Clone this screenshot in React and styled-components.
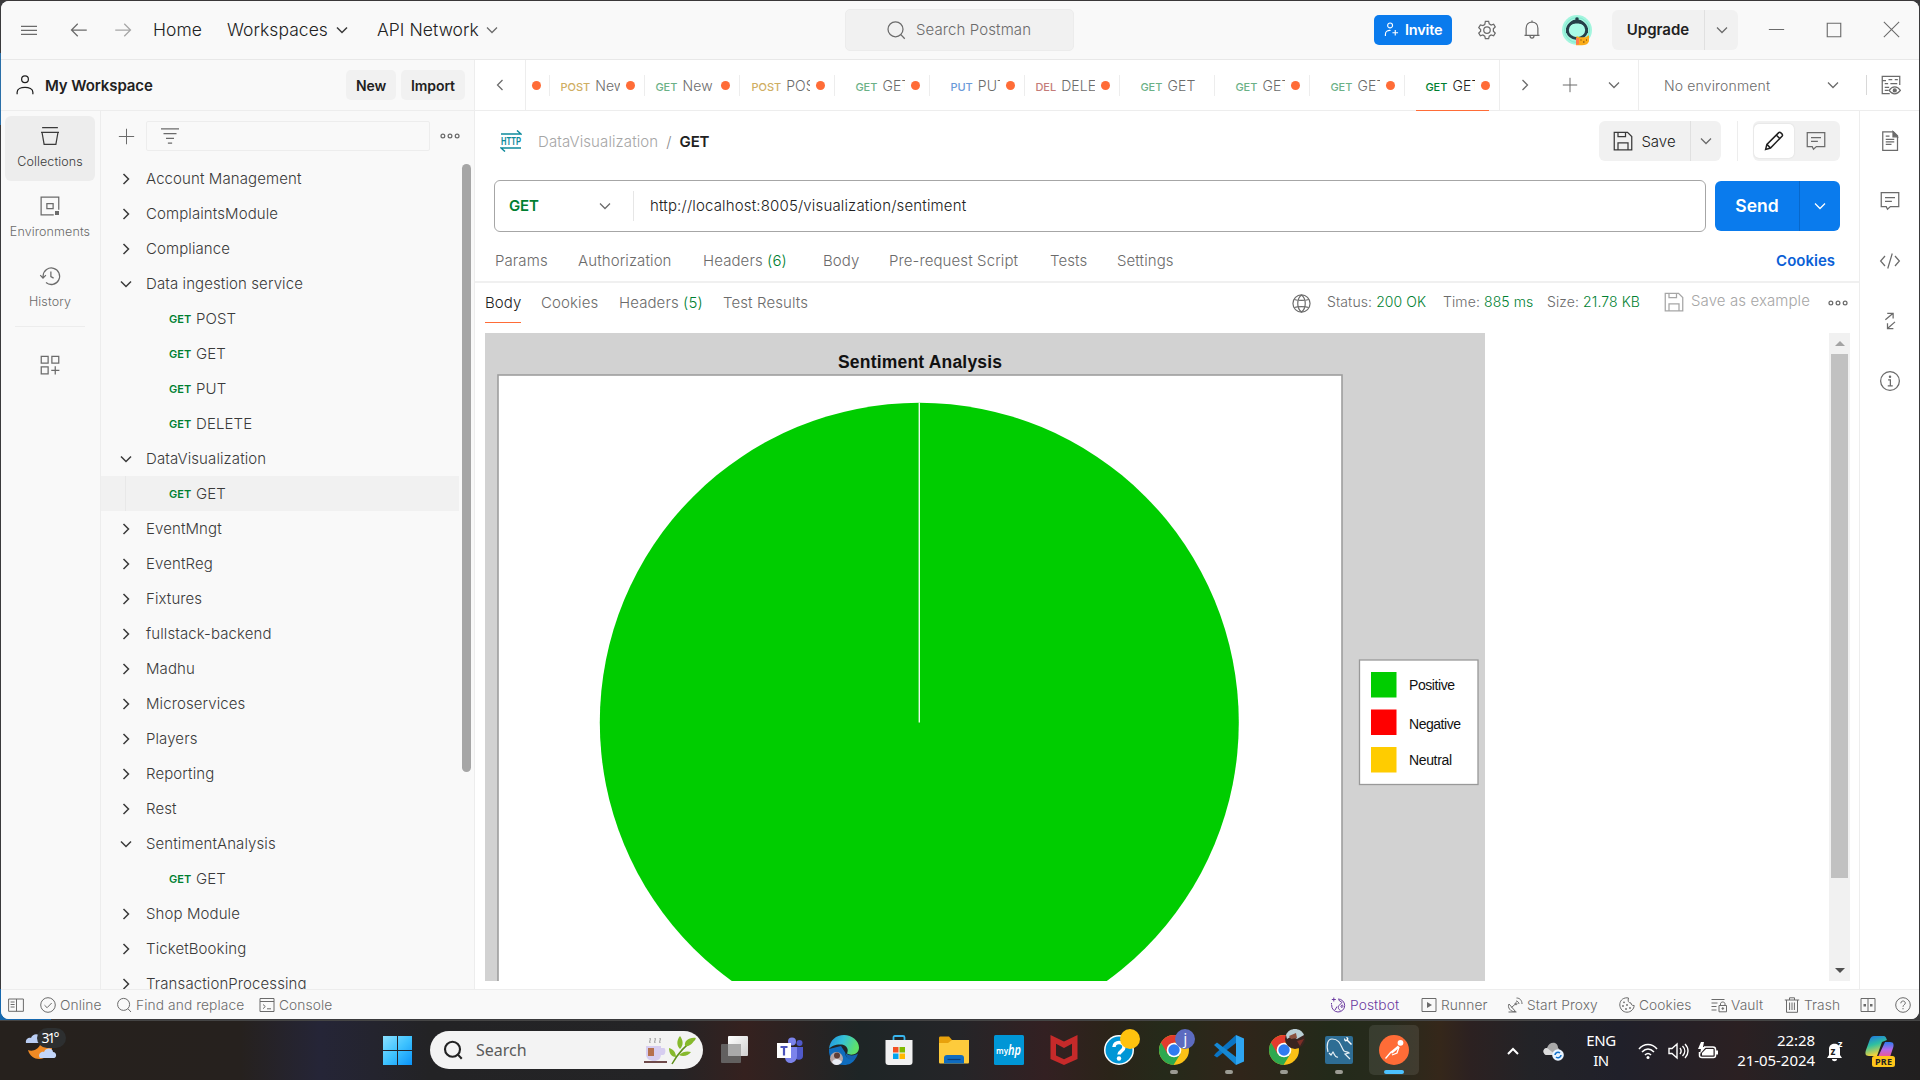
import React from "react";
import styled, { createGlobalStyle } from "styled-components";

const Global = createGlobalStyle`
  *, *::before, *::after { box-sizing: border-box; }
  body { margin: 0; background: #333; }
  #root { font-family: Inter, "Liberation Sans", sans-serif; font-weight: 355; letter-spacing: 0.1px; }
`;

/* ---------- icons ---------- */
const Svg = styled.svg`
  display: block;
  flex: none;
  width: ${(p) => p.$s || 20}px;
  height: ${(p) => p.$s || 20}px;
  fill: none;
  stroke: currentColor;
  stroke-width: ${(p) => p.$sw || 1};
  color: ${(p) => p.$c || "#6b6b6b"};
  overflow: visible;
`;

const shapes = {
  menu: <path d="M1.6 5h12.8M1.6 8.2h12.8M1.6 11.4h12.8" />,
  left: <path d="M14.2 8H2.2M7 3L2 8l5 5" />,
  right: <path d="M1.8 8h12M9 3l5 5-5 5" />,
  down: <path d="M4 6l4 4 4-4" />,
  chevLeft: <path d="M10 4L6 8l4 4" />,
  chevRight: <path d="M6 4l4 4-4 4" />,
  search: <><circle cx="7.6" cy="7.4" r="6" /><path d="M11.9 11.7L15 15" /></>,
  plus: <path d="M8 .8v14.4M.8 8h14.4" />,
  gear: <><circle cx="8" cy="8" r="2.6" /><path d="M6.7.6h2.6l.5 2 1.5.9 2-.6 1.3 2.2-1.5 1.5v1.8l1.5 1.5-1.3 2.2-2-.6-1.5.9-.5 2H6.7l-.5-2-1.5-.9-2 .6-1.3-2.2 1.5-1.5V7.1L1.400 5.600l1.300-2.200 2 .6 1.500-.9z" transform="translate(0 .5)" /></>,
  bell: <><path d="M2 12.300h12M3.300 12.300V6.500C3.300 3.500 5.300 1.600 8 1.600s4.700 1.900 4.700 4.900v5.800M8 1.600V.3M6.400 12.600c0 2.500 3.200 2.500 3.200 0" /></>,
  user: <><circle cx="8" cy="3.300" r="2.700" /><path d="M1.700 15.300v-1.600c0-5.200 12.600-5.200 12.600 0v1.600" /></>,
  invite: <><circle cx="6.500" cy="3.600" r="2.600" /><path d="M1.500 15v-2c0-3 2.500-4.300 5.500-4M12 8.500v6M9 11.500h6" /></>,
  collections: <path d="M1.700 1.300h12.600M.8 5h14.400M1.600 5l1.700 9.700h9.400L14.400 5" />,
  environments: <><path d="M11 15H.9V.9H15V11" /><path d="M5.500 6h5v4h-5z" /><path d="M12 12h3.200v3.200H12z" fill="currentColor" stroke="none" /></>,
  history: <><path d="M2.500 9.500V7.800a6.600 6.600 0 1 1 2.300 5.400M.2 7.300l2.200 2.400 2.300-2.400M8.700 4.300v4.200l2.200 1.200" /></>,
  apps: <><path d="M1 1h5.500v5.500H1zM9.500 1H15v5.500H9.500zM1 9.500h5.500V15H1zM12.200 9v6.500M9 12.200h6.500" /></>,
  filter: <path d="M.8 2.300h14.400M2.800 6.100h10.400M4.800 9.900h6.400M6.300 13.600h3.400" />,
  dots: <><circle cx="2.300" cy="8" r="1.500" /><circle cx="8" cy="8" r="1.500" /><circle cx="13.700" cy="8" r="1.500" /></>,
  save: <><path d="M1 1h10.600L15 4.400V15H1zM4 1v3.400h6V1M4 15V9.500h8V15" /></>,
  pencil: <><path d="M1.300 14.700l1-4L11.800 1.300c1-1 3.800 1.700 2.800 2.700L5.200 13.600zM9.800 3.200l2.900 2.900M2.300 10.700l2.900 2.900" /></>,
  comment: <><path d="M1 1.300h14v11.200H8.300L6 14.600l-1-2.100H1zM4 5.200h8M4 8.200h5.500" /></>,
  doc: <><path d="M2.200.6h8.600l3.200 3.200v11.600H2.200zM4.600 6.700h6.800M4.600 8.700h6.800M4.600 10.700h4.600M4.600 4h3" /><path d="M10.400.6v4H14z" fill="currentColor" /></>,
  code: <path d="M4 4L.5 8 4 12M12 4l3.500 4L12 12M9.800 2L6.200 14" />,
  swap: <><path d="M4.300 7L10.500 1.800M5.800 1.800h4.700v4.200M12 8.700L6 14M6 9.700V14h4.700" /></>,
  info: <><circle cx="8" cy="8" r="7.500" /><path d="M6.500 7h1.800v4.700M6.200 11.800h4" /><circle cx="8" cy="4.500" r=".5" fill="currentColor" /></>,
  envQuick: <><path d="M7 14.800H1V1h14v7M1 4.500h3M6 3.700h3M11 3.700h2.500M3 6.800h2.700M7.500 6.800H13M3 9.800h3.500M3 12.300h3" /><path d="M6.500 12.300c2.500-3.800 6.500-3.800 9 0-2.500 3.600-6.500 3.600-9 0z" /><circle cx="11" cy="12.300" r="1.200" fill="currentColor" /></>,
  globe: <><circle cx="8" cy="8" r="7.200" /><path d="M8 .8C3.800 4 3.800 12 8 15.200 12.200 12 12.200 4 8 .8M1.900 4.600c3 1 9.200 1 12.200 0M1.900 11.400c3-1 9.200-1 12.200 0" /></>,
  panel: <path d="M.6 2h14.800v12.300H.6zM8.500 2v12.300M2.600 5h4M2.600 7.500h4M2.600 10h4" />,
  check: <><circle cx="8" cy="8" r="7.300" /><path d="M4.500 8.200l2.600 2.500L11.700 6" /></>,
  console: <path d="M1 1.500h14v13H1zM1 4.500h14M4 7.500l2.300 2L4 11.700M8 11.800h4" />,
  postbot: <><path d="M8 2a6.500 6.500 0 1 1-6.300 6M3.800.5v4M1.800 2.500h4M1.500 6v1.500" /><path d="M8.500 3L12 5.500 9 8.500c-1.500 2-.5 3.800 1.500 5M5 13l2-3.500M11 9c1-1.500 2-1 2 0s-1 2-2 1z" /></>,
  runner: <><path d="M1 1.500h14v13H1z" /><path d="M6 5l5 3-5 3z" fill="currentColor" stroke="none" /></>,
  proxy: <><path d="M2 7c-2 3 1.500 8.500 6.500 7.500zM4.500 10.500L9 6.500M1.500 15h8M9 4c1.500 0 3 1.500 3 3M9.500 1c3.500 0 5.500 2.500 5.500 6" /><circle cx="9" cy="6.800" r="1" /></>,
  cookie: <><path d="M8 .8C3 .8.700 4.500.8 8c.2 4 3.200 7.200 7.200 7.200S15 12 15.200 8.500C13 8.700 12 7.500 12 6 9.500 6 8.500 4 9.500 1z" /><g fill="currentColor" stroke="none"><circle cx="5" cy="5.300" r=".9" /><circle cx="4" cy="9" r=".9" /><circle cx="8" cy="8" r=".9" /><circle cx="7" cy="12" r=".9" /><circle cx="11" cy="11" r=".9" /></g></>,
  vault: <><path d="M.5 2.500h13M.5 6h6M.5 9.500h5M.5 13h5M8 8.500h7.500v6.300H8zM9.500 8.500V6.800c0-2.400 4.500-2.400 4.500 0v1.700" /><circle cx="11.800" cy="11.500" r=".8" fill="currentColor" /></>,
  trash: <path d="M.8 3h14.400M5.500 3V.8h5V3M2.500 3v12.300h11V3M5.600 5.500v7.500M8 5.500v7.500M10.400 5.500v7.500" />,
  panes: <><path d="M1 1.500h14v13H1zM8 1.500v13" /><path d="M3.500 7H6v2.500H3.500zM10 7h2.500v2.500H10z" fill="currentColor" stroke="none" /></>,
  help: <><circle cx="8" cy="8" r="7.300" /><path d="M5.800 6.300c0-3 4.500-3 4.500-.2C10.300 7.800 8 7.800 8 9.800M8 11v1.300" /></>,
  minimize: <path d="M.8 8h14.400" />,
  maximize: <path d="M2 2h12v12H2z" />,
  close: <path d="M.8.8l14.400 14.400M15.200.8L.8 15.200" />,
};

const Icon = ({ n, s, c, sw }) => (
  <Svg viewBox="0 0 16 16" $s={s} $c={c} $sw={sw} aria-hidden="true">{shapes[n]}</Svg>
);

/* ---------- shell ---------- */
const Desktop = styled.div`
  width: 1920px;
  height: 1080px;
  display: flex;
  flex-direction: column;
  overflow: hidden;
  background:
    linear-gradient(#3a3839, #3a3839) 0 0 / 1920px 1px no-repeat,
    linear-gradient(90deg, #1668ae, #1668ae) 0 989px / 51px 31px no-repeat,
    linear-gradient(#2a6fa8, #2a6fa8) 0 53px / 1px 72px no-repeat,
    #3a3a3c;
`;
const AppWindow = styled.div`
  width: 1918px;
  height: 1018px;
  margin: 1px 1px 0;
  display: flex;
  flex-direction: column;
  overflow: hidden;
  background: #fff;
  border-radius: 8px;
  flex: none;
`;
const Cell = styled.div`
  width: ${(p) => p.$w}px;
  height: 100%;
  flex: none;
  display: flex;
  align-items: center;
  justify-content: center;
`;
const Spring = styled.div`flex: 1;`;

/* ---------- title bar ---------- */
const TitleBar = styled.header`
  height: 59px;
  flex: none;
  display: flex;
  align-items: center;
  padding-bottom: 1px;
  background: #f9f9f9;
  border-bottom: 1px solid #e8e8e8;
`;
const TitleLeft = styled.div`
  width: 844px;
  height: 100%;
  display: flex;
  align-items: center;
  padding-left: 4px;
`;
const NavItem = styled.div`
  width: ${(p) => p.$w}px;
  margin-left: ${(p) => p.$ml}px;
  display: flex;
  align-items: center;
  justify-content: space-between;
  font-size: 17.5px;
  letter-spacing: 0.05px;
  color: #212121;
  white-space: nowrap;
`;
const SearchBox = styled.div`
  width: 229px;
  height: 42px;
  display: flex;
  align-items: center;
  gap: 10px;
  padding-left: 40px;
  background: #f1f1f1;
  border: 1px solid #ececec;
  border-radius: 5px;
  font-size: 15px;
  color: #6b6b6b;
`;
const InviteButton = styled.div`
  width: 78px;
  height: 30px;
  margin-left: 300px;
  display: flex;
  align-items: center;
  gap: 6px;
  padding-left: 10px;
  border-radius: 5px;
  background: #0a7bed;
  color: #fff;
  font-size: 14.500px;
  font-weight: 600;
  letter-spacing: -0.2px;
`;
const SplitButton = styled.div`
  width: ${(p) => p.$w}px;
  height: 40px;
  display: flex;
  align-items: center;
  border-radius: 6px;
  background: #f1f1f1;
  font-size: 15px;
  font-weight: ${(p) => p.$weight || "inherit"};
  letter-spacing: 0;
  color: #212121;
`;
const SplitMain = styled.div`
  width: ${(p) => p.$w}px;
  height: 100%;
  display: flex;
  align-items: center;
  justify-content: center;
  gap: 8px;
  padding-bottom: ${(p) => p.$lift || 0}px;
  border-right: 1px solid ${(p) => p.$line || "#e0e0e0"};
`;

/* ---------- workspace bar ---------- */
const WorkspaceBar = styled.div`
  height: 51px;
  flex: none;
  display: flex;
  border-bottom: 1px solid #ededed;
`;
const WorkspaceHead = styled.div`
  width: 474px;
  display: flex;
  align-items: center;
  padding: 0 9px 0 14px;
  background: #f9f9f9;
  border-right: 1px solid #ededed;
  font-size: 15px;
  font-weight: 600;
  letter-spacing: -0.1px;
  color: #212121;
  gap: 10px;
`;
const GhostButton = styled.div`
  width: ${(p) => p.$w}px;
  height: 30px;
  margin-left: ${(p) => p.$ml || 0}px;
  display: flex;
  align-items: center;
  justify-content: center;
  border-radius: 5px;
  background: #f1f1f1;
  font-size: 14px;
  font-weight: 600;
`;
const TabStrip = styled.div`
  display: flex;
  width: 975px;
  border-left: 1px solid #ededed;
  border-right: 1px solid #ededed;
`;
const methodColor = { GET: "#6bb187", POST: "#cfae63", PUT: "#6a9ad9", DEL: "#c47b78" };
const Tab = styled.div`
  position: relative;
  width: 95px;
  flex: none;
  height: 51px;
  display: flex;
  align-items: center;
  padding-left: ${(p) => p.$pl}px;
  color: ${(p) => (p.$active ? "#212121" : "#6b6b6b")};
  &::before {
    content: "";
    position: absolute;
    left: 0;
    top: 15px;
    width: 1px;
    height: 21px;
    background: #ededed;
  }
  &::after {
    content: "";
    position: absolute;
    left: 12px;
    bottom: 0;
    width: 73px;
    height: 1px;
    background: ${(p) => (p.$active ? "#ff6c37" : "transparent")};
  }
`;
const TabLabel = styled.div`
  width: ${(p) => 71 - p.$pl}px;
  display: flex;
  align-items: baseline;
  gap: 5px;
  overflow: ${(p) => (p.$full ? "visible" : "hidden")};
  white-space: nowrap;
  font-size: 14px;
`;
const TabMethod = styled.span`
  font-size: 11px;
  font-weight: 500;
  letter-spacing: 0;
  color: ${(p) => (p.$active ? "#007f31" : methodColor[p.$m])};
`;
const Dot = styled.span`
  width: 9px;
  height: 9px;
  margin-left: 6px;
  border-radius: 50%;
  background: #ff6c37;
`;
const PartTab = styled.div`
  width: 23.4px;
  flex: none;
  display: flex;
  align-items: center;
`;
const EnvPicker = styled.div`
  width: 228px;
  display: flex;
  align-items: center;
  justify-content: space-between;
  padding: 0 23px 0 25px;
  border-left: 1px solid #ededed;
  font-size: 14px;
  letter-spacing: 0.15px;
  color: #6b6b6b;
`;
const ShortRule = styled.div`
  width: 1px;
  height: ${(p) => p.$h || 20}px;
  background: ${(p) => p.$c || "#d8d8d8"};
  align-self: center;
`;

/* ---------- body ---------- */
const Body = styled.div`
  height: 878px;
  flex: none;
  display: flex;
`;
const IconRail = styled.nav`
  width: 100px;
  background: #f9f9f9;
  border-right: 1px solid #ededed;
  display: flex;
  flex-direction: column;
  align-items: center;
  padding: 5px 1px 0 0;
`;
const RailItem = styled.div`
  width: 90px;
  height: 65px;
  margin-bottom: 5px;
  padding-top: 10px;
  display: flex;
  flex-direction: column;
  align-items: center;
  gap: 7px;
  border-radius: 6px;
  background: ${(p) => (p.$active ? "#ededed" : "transparent")};
  color: ${(p) => (p.$active ? "#3a3a3a" : "#6b6b6b")};
  font-size: 12.500px;
  line-height: 18px;
`;
const RailRule = styled.div`
  width: 70px;
  height: 1px;
  margin: 0 0 28px;
  background: #ededed;
`;
const Sidebar = styled.aside`
  width: 374px;
  background: #f9f9f9;
  border-right: 1px solid #ededed;
  display: flex;
  flex-direction: column;
`;
const FilterRow = styled.div`
  height: 50px;
  flex: none;
  display: flex;
  align-items: center;
  padding-left: 5px;
`;
const FilterInput = styled.div`
  width: 284px;
  height: 30px;
  border: 1px solid #ededed;
  border-radius: 2px;
  display: flex;
  align-items: center;
  padding-left: 13px;
`;
const TreeArea = styled.div`
  flex: 1;
  min-height: 0;
  display: flex;
  overflow: hidden;
`;
const Tree = styled.div`
  width: 358px;
`;
const Folder = styled.div`
  height: 35px;
  display: flex;
  align-items: center;
  padding-left: 15px;
  gap: 10px;
  font-size: 15px;
  color: #3a3a3a;
`;
const Request = styled.div`
  height: 35px;
  display: flex;
  align-items: center;
  background: ${(p) => (p.$active ? "#f1f1f1" : "transparent")};
  font-size: 15px;
  color: #3a3a3a;
`;
const Guide = styled.div`
  width: 44px;
  height: 35px;
  margin-left: 24px;
  border-left: 1px solid ${(p) => (p.$active ? "#e8e8e8" : "transparent")};
`;
const Verb = styled.span`
  width: 27px;
  font-size: 11px;
  font-weight: 600;
  letter-spacing: 0;
  color: #007f31;
`;
const Thumb = styled.div`
  width: 9px;
  height: 608px;
  margin: 3px 0 0 3px;
  border-radius: 5px;
  background: #a6a6a6;
`;

const Main = styled.main`
  width: 1385px;
  border-right: 1px solid #ededed;
  display: flex;
  flex-direction: column;
`;
const CrumbRow = styled.div`
  height: 60px;
  flex: none;
  display: flex;
  align-items: center;
  padding: 0 19px 0 25px;
  font-size: 15px;
  color: #a6a6a6;
`;
const HttpIcon = styled.svg`
  width: 22px;
  height: 22px;
  margin-right: 16px;
  fill: none;
  stroke: #0e8a9c;
  stroke-width: 1.5;
  text { fill: #0e8a9c; stroke: none; font: 600 11px "Liberation Sans Narrow", "Liberation Sans", sans-serif; }
`;
const CrumbName = styled.span`
  font-weight: 600;
  letter-spacing: -0.2px;
  color: #212121;
`;
const Slash = styled.span`
  margin: 0 8px 0 8px;
  color: #8a8a8a;
`;
const Toggle = styled.div`
  width: 87px;
  height: 40px;
  padding: 3px 1px;
  display: flex;
  border-radius: 6px;
  background: #f1f1f1;
`;
const ToggleItem = styled.div`
  width: ${(p) => (p.$on ? 40 : 43)}px;
  height: 34px;
  display: flex;
  align-items: center;
  justify-content: center;
  border-radius: 5px;
  background: ${(p) => (p.$on ? "#fff" : "transparent")};
  box-shadow: ${(p) => (p.$on ? "0 0 2px rgba(0,0,0,.12)" : "none")};
`;
const UrlRow = styled.div`
  height: 70px;
  flex: none;
  display: flex;
  align-items: center;
  padding: 0 19px 0 19px;
`;
const UrlBox = styled.div`
  width: 1212px;
  height: 52px;
  display: flex;
  align-items: center;
  padding-bottom: 1px;
  border: 1px solid #a6a6a6;
  border-radius: 6px;
  font-size: 15px;
  color: #212121;
`;
const MethodPick = styled.div`
  width: 138px;
  display: flex;
  align-items: center;
  justify-content: space-between;
  padding: 0 18px 0 14px;
  color: #007f31;
  font-weight: 600;
  letter-spacing: -0.2px;
`;
const UrlText = styled.span`
  margin-left: 16px;
  letter-spacing: 0.16px;
`;
const SendButton = styled.div`
  width: 125px;
  height: 50px;
  margin-left: 9px;
  display: flex;
  align-items: center;
  border-radius: 6px;
  background: #0a7bed;
  color: #fff;
  font-size: 17.500px;
  font-weight: 600;
  letter-spacing: 0;
`;
const RequestTabs = styled.div`
  height: 42px;
  flex: none;
  display: flex;
  align-items: center;
  padding: 0 24px 2px 20px;
  border-bottom: 2px solid #f0f0f0;
  font-size: 15px;
  color: #6b6b6b;
`;
const TextTab = styled.div`
  width: ${(p) => p.$w}px;
  flex: none;
  white-space: pre;
  em { font-style: normal; color: #007f31; }
`;
const CookiesLink = styled.span`
  font-weight: 600;
  letter-spacing: 0px;
  color: #0b5fd6;
`;
const ResponseBar = styled.div`
  height: 50px;
  flex: none;
  display: flex;
  align-items: flex-start;
  padding: 0 10px 0 10px;
  font-size: 15px;
  line-height: 40px;
  color: #6b6b6b;
`;
const ActiveTab = styled(TextTab)`
  width: 36px;
  height: 40px;
  margin-right: 20px;
  color: #212121;
  border-bottom: 1px solid #ff6c37;
`;
const MetaIcon = styled.div`
  width: ${(p) => p.$w}px;
  height: ${(p) => p.$h || 40}px;
  display: flex;
  align-items: center;
`;
const Stat = styled.span`
  width: ${(p) => p.$w}px;
  flex: none;
  white-space: pre;
  font-size: 14px;
  line-height: 38px;
  b { font-weight: inherit; color: #007f31; }
`;
const SaveExample = styled.span`
  width: 137px;
  flex: none;
  line-height: 36px;
  color: #a6a6a6;
`;
const Preview = styled.div`
  flex: 1;
  min-height: 0;
  display: flex;
  padding: 0 9px 8px 10px;
`;
const Chart = styled.svg`
  display: block;
  width: 1000px;
  height: 648px;
  background: #d2d2d2;
  text { font-family: "Liberation Sans", Arial, sans-serif; fill: #111; letter-spacing: 0; }
`;
const ScrollTrack = styled.div`
  width: 21px;
  height: 648px;
  margin-left: auto;
  display: flex;
  flex-direction: column;
  align-items: center;
  justify-content: space-between;
  background: #f1f1f1;
`;
const ScrollThumb = styled.div`
  width: 17px;
  height: 524px;
  margin-bottom: auto;
  background: #c1c1c1;
`;
const Arrow = styled.div`
  width: 21px;
  height: 21px;
  display: flex;
  align-items: center;
  justify-content: center;
  &::after {
    content: "";
    border: 5px solid transparent;
    border-top-width: ${(p) => (p.$up ? 0 : 5)}px;
    border-bottom-width: ${(p) => (p.$up ? 5 : 0)}px;
    border-top-color: #505050;
    border-bottom-color: #a3a3a3;
  }
`;
const ToolRail = styled.nav`
  flex: 1;
  display: flex;
  flex-direction: column;
  align-items: center;
  padding-top: 20px;
  gap: 40px;
`;

/* ---------- status bar ---------- */
const StatusBar = styled.footer`
  flex: 1;
  display: flex;
  align-items: center;
  padding: 1px 8px 0 7px;
  background: #f9f9f9;
  border-top: 1px solid #ededed;
  font-size: 13.750px;
  color: #6b6b6b;
`;
const StatusItem = styled.div`
  width: ${(p) => p.$w}px;
  flex: none;
  display: flex;
  align-items: center;
  gap: 4px;
  white-space: nowrap;
  color: ${(p) => p.$c || "inherit"};
`;

/* ---------- taskbar ---------- */
const Taskbar = styled.div`
  flex: 1;
  margin-top: 1px;
  display: flex;
  align-items: center;
  border-top: 1px solid #454545;
  font-family: "Noto Sans", "Open Sans", sans-serif;
  font-weight: 400;
  letter-spacing: 0;
  background: linear-gradient(90deg, #26211d 0, #26211e 240px, #252537 320px, #232325 430px, #242426 670px, #35211f 745px, #1e2526 860px, #252528 960px, #332022 1045px, #2b2419 1110px, #252a1a 1165px, #30251a 1240px, #232a1a 1330px, #272a1c 1390px, #35271a 1440px, #2c2121 1470px, #232327 1530px, #20202a 1620px, #2b2022 1740px, #212225 1810px, #211f1f 1920px);
`;
const Weather = styled.div`
  width: 383px;
  height: 100%;
  padding: 7px 0 0 24px;
`;
const TaskSearch = styled.div`
  width: 273px;
  height: 38px;
  margin: 0 6px 2px 18px;
  display: flex;
  align-items: center;
  padding: 0 5px 0 13px;
  gap: 13px;
  border-radius: 19px;
  background: #f3f3f3;
  color: #5a5a5a;
  font-size: 16px;
`;
const TaskButton = styled.div`
  width: 50px;
  height: 50px;
  margin: 0 5px 2px 0;
  display: flex;
  flex-direction: column;
  align-items: center;
  border-radius: 5px;
  background: ${(p) => (p.$active ? "rgba(255,255,255,.09)" : "transparent")};
  padding-top: 10px;
  &::after {
    content: "";
    width: ${(p) => (p.$active ? 20 : 8)}px;
    height: 4px;
    margin-top: 5px;
    border-radius: 2px;
    background: ${(p) => (p.$active ? "#4cc2ff" : p.$open ? "#9b9b93" : "transparent")};
  }
`;
const Art = styled.svg`
  display: block;
  flex: none;
  width: ${(p) => p.$w || 30}px;
  height: ${(p) => p.$h || 30}px;
  overflow: visible;
`;
const TrayText = styled.div`
  width: ${(p) => p.$w}px;
  text-align: ${(p) => p.$align || "center"};
  color: #fff;
  font-size: 15px;
  line-height: 20px;
  letter-spacing: ${(p) => p.$ls}px;
  white-space: pre-line;
  padding-bottom: 2px;
`;

/* ---------- data ---------- */
const tabs = [
  { m: "POST", t: "New", pl: 11, d: 1 },
  { m: "GET", t: "New", pl: 11, d: 1 },
  { m: "POST", t: "POST", pl: 12, d: 1 },
  { m: "GET", t: "GET", pl: 21, d: 1 },
  { m: "PUT", t: "PUT", pl: 21, d: 1 },
  { m: "DEL", t: "DELETE", pl: 11, d: 1 },
  { m: "GET", t: "GET", pl: 21 },
  { m: "GET", t: "GET", pl: 21, d: 1 },
  { m: "GET", t: "GET", pl: 21, d: 1 },
  { m: "GET", t: "GET", pl: 21, d: 1, active: true },
];
const tree = [
  ["Account Management"], ["ComplaintsModule"], ["Compliance"], ["Data ingestion service", 1],
  "POST", "GET", "PUT", "DELETE", ["DataVisualization", 1], "*GET", ["EventMngt"], ["EventReg"], ["Fixtures"],
  ["fullstack-backend"], ["Madhu"], ["Microservices"], ["Players"], ["Reporting"], ["Rest"],
  ["SentimentAnalysis", 1], "GET", ["Shop Module"], ["TicketBooking"], ["TransactionProcessing"],
];

const Avatar = () => (
  <Art viewBox="0 0 30 30">
    <circle cx="15" cy="15" r="15" fill="#a3f5de" />
    <circle cx="15" cy="15" r="12.500" fill="none" stroke="#7eead0" />
    <circle cx="15" cy="4" r="1.800" fill="#26404a" />
    <ellipse cx="15" cy="15" rx="9.600" ry="8.600" fill="#a9fbe7" stroke="#26404a" strokeWidth="2.800" />
    <path d="M5.500 13a9.500 8.500 0 0 1 19 0c-2-3.500-6-4.500-9.500-4.500S7.500 9.500 5.500 13z" fill="#26404a" />
    <path d="M4 13h2v5H4zM24 13h2v5h-2z" fill="#26404a" />
    <path d="M14.500 21l3 1.200h6l3.500-2v6c-1 3-4 4-7 4h-6z" fill="#fbac19" />
    <path d="M14 23h3v6.500h-3z" fill="#ff7a4f" />
    <path d="M18.500 25h1M24 25h1M21 27h1.500" stroke="#5e3a10" />
  </Art>
);

const PieChart = () => (
  <Chart viewBox="485 333 1000 648">
    <rect x="498" y="375" width="844" height="700" fill="#fff" stroke="#9e9e9e" strokeWidth="1.600" />
    <circle cx="919.300" cy="722.300" r="319.500" fill="#00cd00" />
    <path d="M919.300 402.500V722.500" stroke="#e6fbe6" strokeWidth="1.400" />
    <text x="838" y="368" fontSize="17.500" fontWeight="700" textLength="164">Sentiment Analysis</text>
    <rect x="1359.500" y="660" width="118.500" height="124.500" fill="#fff" stroke="#999" strokeWidth="1.300" />
    <rect x="1371" y="672" width="25.500" height="25.500" fill="#00cd00" />
    <rect x="1371" y="709.500" width="25.500" height="25.500" fill="#f00" />
    <rect x="1371" y="747" width="25.500" height="25.500" fill="#fc0" />
    <text x="1409" y="690" fontSize="14" fontWeight="400" textLength="46">Positive</text>
    <text x="1409" y="729" fontSize="14" fontWeight="400" textLength="52">Negative</text>
    <text x="1409" y="765" fontSize="14" fontWeight="400" textLength="43">Neutral</text>
  </Chart>
);

const Chrome = ({ children }) => (
  <Art viewBox="0 0 30 30">
    <circle cx="15" cy="15" r="15" fill="#fbc116" />
    <path d="M15 15h-7L2 7.500A15 15 0 0 0 14.500 30L21.500 18.700z" fill="#2da94f" />
    <path d="M2 7.500A15 15 0 0 1 28 7.500H15L8.500 18.700z" fill="#e33b2e" />
    <circle cx="15" cy="15" r="7.300" fill="#fff" />
    <circle cx="15" cy="15" r="5.700" fill="#2f7bf0" />
    {children}
  </Art>
);

const apps = [
  { art: <Art viewBox="0 0 30 30"><defs><linearGradient id="tv" x2="1" y2="1"><stop stopColor="#fff" /><stop offset="1" stopColor="#cfcfcf" /></linearGradient></defs><rect x="9" y="1" width="20" height="20" rx="1" fill="url(#tv)" /><rect x="2" y="9" width="20" height="19" rx="1" fill="#6b6b6b" opacity=".85" /><path d="M9 9h13v12H9z" fill="#a9a9a9" /></Art> },
  { art: <Art viewBox="0 0 30 30"><circle cx="18" cy="6.500" r="4" fill="#7b83eb" /><circle cx="25.500" cy="8" r="3" fill="#5059c9" /><path d="M20 12h9v9c0 5-8 5-9 0z" fill="#5059c9" /><path d="M11 12h12v9c0 8-11 10-12 2z" fill="#7b83eb" /><rect x="3" y="8" width="14" height="15" fill="#fff" /><path d="M6.500 12h7M10 12v8.500" stroke="#4b53bc" strokeWidth="2.200" /></Art> },
  { art: <Art viewBox="0 0 30 30"><defs><linearGradient id="ed" x2="1" y2=".3"><stop stopColor="#1f8fe0" /><stop offset=".5" stopColor="#35c1d6" /><stop offset="1" stopColor="#5ee06a" /></linearGradient></defs><path d="M0 14C-1 23 6 30 15 30c5 0 9-2 11.500-6.500C21 25 16 23 16.500 18L12 11z" fill="#0f6cbd" /><path d="M0 14C1 5 7 0 15 0s15 6 15 12.500c0 7-8 8.500-12 6 2-4 0-8-5-9C7 9 2 11 0 14z" fill="url(#ed)" /><path d="M17 18.500c4 3 9 2 12 0-1 3-2 5-3.500 6-5 1-9-1-8.500-6z" fill="#1562ad" /><circle cx="7.500" cy="23.500" r="6.500" fill="#b7a6a6" /><circle cx="8" cy="20.500" r="3" fill="#5f3d36" /><path d="M3 27c2-4 7-4 10 0-3 4-8 4-10 0z" fill="#e9edf5" /></Art> },
  { art: <Art viewBox="0 0 30 30"><path d="M9.500 7V2.500c0-1 .5-1.500 1.500-1.500h8c1 0 1.500.5 1.500 1.500V7" fill="none" stroke="#38b6ee" strokeWidth="1.800" /><path d="M1.500 5h27v22c0 2-1 3-3 3h-21c-2 0-3-1-3-3z" fill="#f1f1f1" /><path d="M9 12h5.500v5.500H9z" fill="#f25022" /><path d="M15.500 12H21v5.500h-5.500z" fill="#7fba00" /><path d="M9 18.500h5.500V24H9z" fill="#00a4ef" /><path d="M15.500 18.500H21V24h-5.500z" fill="#ffb900" /></Art> },
  { art: <Art viewBox="0 0 30 30"><path d="M0 3c0-1 .5-1.500 1.500-1.500H10l3 3.500v5H0z" fill="#e8a20c" /><path d="M0 8h9l4-3h17v22c0 1-.5 1.500-1.500 1.500h-27C.5 28.500 0 28 0 27z" fill="#fdcb3c" /><path d="M5 28.500V23c0-2 1-3 3-3h14c2 0 3 1 3 3v5.500z" fill="#0f6cc0" /><path d="M8.500 24.500h13" stroke="#083f7c" strokeWidth="1.200" /></Art> },
  { art: <Art viewBox="0 0 30 30"><rect width="30" height="30" rx="1.500" fill="#0096d6" /><text x="2" y="18.500" fontSize="9" fontWeight="600" fill="#fff" textLength="12" lengthAdjust="spacingAndGlyphs">my</text><text x="14" y="19.500" fontSize="14" fontStyle="italic" fontWeight="600" fill="#fff" textLength="13" lengthAdjust="spacingAndGlyphs">hp</text></Art> },
  { art: <Art viewBox="0 0 30 30"><path d="M1.500 0L15 6.500 28.500 0v24L15 30 1.500 24zM7 8.800v11.700l8 3.700 8-3.700V8.800l-8 4.200z" fill="#c62a2a" fillRule="evenodd" /></Art> },
  { art: <Art viewBox="0 0 30 30"><circle cx="15" cy="15" r="15" fill="#fff" /><circle cx="15" cy="15" r="13.500" fill="#0096d6" /><path d="M10 12c0-6 10-6 10 0 0 4-5 4-5 7.500" fill="none" stroke="#fff" strokeWidth="3.500" /><circle cx="15" cy="23.500" r="2.200" fill="#fff" /><circle cx="26" cy="4" r="10" fill="#ffc20e" /></Art> },
  { open: 1, art: <Chrome><circle cx="26" cy="4" r="10" fill="#5c6bc0" /><text x="24.500" y="9" fontSize="14" fill="#fff">j</text></Chrome> },
  { open: 1, art: <Art viewBox="0 0 30 30"><path d="M22 0l-20 18 -2 2.500L3 22.500 22 8z" fill="#0a74c4" /><path d="M0 10l3-2.500L22 22v8z" fill="#1588d4" /><path d="M22 0l8 3.500v23L22 30z" fill="#2ea5f2" /></Art> },
  { open: 1, art: <Chrome><circle cx="26" cy="4" r="10" fill="#3a2420" /><path d="M17 0C20-8 32-8 35 0l-7 4-5-3-5 3z" fill="#b9cfd6" /><path d="M20 1l7-3 1 5-6 1z" fill="#8b5240" /><path d="M28 6l7-2-4 7z" fill="#7e2f27" /></Chrome> },
  { open: 1, art: <Art viewBox="0 0 30 30"><rect x="1" y="1" width="28" height="28" rx="2" fill="#2e6d94" /><path d="M4 17C2 9 4 4 8 4c9 0 9 9 12 12 2 1 4 1 5 2l-4 1 5 5M5 18l2 2 2-3c2 3 2 6 5 5" fill="none" stroke="#e6eff4" strokeWidth="1.200" /><path d="M20 3c0 3 1 4 3 3l4 4 1-1-4-4c1-2 0-3-2-3l1 2-1 1z" fill="#fff" /></Art> },
  { active: 1, art: <Art viewBox="0 0 30 30"><circle cx="15" cy="15" r="15" fill="#ff6c37" /><circle cx="21.500" cy="7.800" r="2.900" fill="#fff" /><path d="M19 10.500l-7.500 6.200 1.500 2 7.500-6.200z" fill="#fff" /><path d="M12 17l-5.500 6.500M20 12l-2 6-5 2" fill="none" stroke="#fff" strokeWidth="1.300" /></Art> },
];

export default function App() {
  return (
    <Desktop>
      <Global />
      <AppWindow>
        <TitleBar>
          <TitleLeft>
            <Cell $w={48}><Icon n="menu" /></Cell>
            <Cell $w={51}><Icon n="left" /></Cell>
            <Cell $w={37}><Icon n="right" c="#a6a6a6" /></Cell>
            <NavItem $ml={12} $w={74}>Home</NavItem>
            <NavItem $ml={0} $w={125}>Workspaces<Icon n="down" c="#3a3a3a" sw={1.2} /></NavItem>
            <NavItem $ml={25} $w={125}>API Network<Icon n="down" /></NavItem>
          </TitleLeft>
          <SearchBox><Icon n="search" />Search Postman</SearchBox>
          <InviteButton><Icon n="invite" s={15} c="#fff" sw={1.2} />Invite</InviteButton>
          <Cell $w={69}><Icon n="gear" /></Cell>
          <Cell $w={21}><Icon n="bell" /></Cell>
          <Cell $w={70}><Avatar /></Cell>
          <SplitButton $w={126} $weight={600}>
            <SplitMain $w={93}>Upgrade</SplitMain>
            <Cell $w={33}><Icon n="down" /></Cell>
          </SplitButton>
          <Cell $w={76}><Icon n="minimize" s={17} /></Cell>
          <Cell $w={40}><Icon n="maximize" s={18} /></Cell>
          <Spring />
          <Cell $w={56}><Icon n="close" s={17} /></Cell>
        </TitleBar>

        <WorkspaceBar>
          <WorkspaceHead>
            <Icon n="user" c="#212121" />
            My Workspace
            <Spring />
            <GhostButton $w={50}>New</GhostButton>
            <GhostButton $w={64} $ml={-5}>Import</GhostButton>
          </WorkspaceHead>
          <Cell $w={50}><Icon n="chevLeft" /></Cell>
          <TabStrip>
            <PartTab><Dot /></PartTab>
            {tabs.map((t, i) => (
              <Tab key={i} $pl={t.pl} $active={t.active}>
                <TabLabel $pl={t.pl} $full={!t.d}><TabMethod $m={t.m} $active={t.active}>{t.m}</TabMethod>{t.t}</TabLabel>
                {t.d && <Dot />}
              </Tab>
            ))}
          </TabStrip>
          <Cell $w={50}><Icon n="chevRight" /></Cell>
          <Cell $w={40}><Icon n="plus" s={16} /></Cell>
          <Cell $w={48}><Icon n="down" /></Cell>
          <EnvPicker>No environment<Icon n="down" /></EnvPicker>
          <ShortRule />
          <Cell $w={48}><Icon n="envQuick" /></Cell>
        </WorkspaceBar>

        <Body>
          <IconRail>
            <RailItem $active><Icon n="collections" c="#3a3a3a" />Collections</RailItem>
            <RailItem><Icon n="environments" />Environments</RailItem>
            <RailItem><Icon n="history" />History</RailItem>
            <RailRule />
            <Icon n="apps" />
          </IconRail>
          <Sidebar>
            <FilterRow>
              <Cell $w={40}><Icon n="plus" s={17} /></Cell>
              <FilterInput><Icon n="filter" /></FilterInput>
              <Cell $w={40}><Icon n="dots" /></Cell>
            </FilterRow>
            <TreeArea>
              <Tree>
                {tree.map((r, i) => {
                  if (Array.isArray(r)) {
                    return <Folder key={i}><Icon n={r[1] ? "down" : "chevRight"} c="#3a3a3a" sw={1.2} />{r[0]}</Folder>;
                  }
                  const active = r[0] === "*";
                  return (
                    <Request key={i} $active={active}>
                      <Guide $active={active} /><Verb>GET</Verb>{r.replace("*", "")}
                    </Request>
                  );
                })}
              </Tree>
              <Thumb />
            </TreeArea>
          </Sidebar>

          <Main>
            <CrumbRow>
              <HttpIcon viewBox="0 0 22 22">
                <path d="M1 4h20l-4-3.500M21 18H1l4 3.500" />
                <text x="1" y="15" textLength="20" lengthAdjust="spacingAndGlyphs">HTTP</text>
              </HttpIcon>
              DataVisualization<Slash>/</Slash><CrumbName>GET</CrumbName>
              <Spring />
              <SplitButton $w={122}>
                <SplitMain $w={92}><Icon n="save" c="#3a3a3a" />Save</SplitMain>
                <Cell $w={30}><Icon n="down" /></Cell>
              </SplitButton>
              <Cell $w={32}><ShortRule $h={40} $c="#ededed" /></Cell>
              <Toggle>
                <ToggleItem $on><Icon n="pencil" c="#212121" sw={1.2} /></ToggleItem>
                <ToggleItem><Icon n="comment" /></ToggleItem>
              </Toggle>
            </CrumbRow>
            <UrlRow>
              <UrlBox>
                <MethodPick>GET<Icon n="down" /></MethodPick>
                <ShortRule $h={30} $c="#e6e6e6" />
                <UrlText>http://localhost:8005/visualization/sentiment</UrlText>
              </UrlBox>
              <SendButton>
                <SplitMain $w={85} $line="#0768cc" $lift={2}>Send</SplitMain>
                <Cell $w={40}><Icon n="down" c="#fff" /></Cell>
              </SendButton>
            </UrlRow>
            <RequestTabs>
              <TextTab $w={83}>Params</TextTab>
              <TextTab $w={125}>Authorization</TextTab>
              <TextTab $w={120}>Headers <em>(6)</em></TextTab>
              <TextTab $w={66}>Body</TextTab>
              <TextTab $w={161}>Pre-request Script</TextTab>
              <TextTab $w={67}>Tests</TextTab>
              <TextTab $w={67}>Settings</TextTab>
              <Spring />
              <CookiesLink>Cookies</CookiesLink>
            </RequestTabs>
            <ResponseBar>
              <ActiveTab>Body</ActiveTab>
              <TextTab $w={78}>Cookies</TextTab>
              <TextTab $w={104}>Headers <em>(5)</em></TextTab>
              <TextTab $w={100}>Test Results</TextTab>
              <Spring />
              <MetaIcon $w={35}><Icon n="globe" s={19} /></MetaIcon>
              <Stat $w={116}>Status: <b>200 OK</b></Stat>
              <Stat $w={104}>Time: <b>885 ms</b></Stat>
              <Stat $w={117}>Size: <b>21.78 KB</b></Stat>
              <MetaIcon $w={27} $h={37}><Icon n="save" c="#a6a6a6" /></MetaIcon>
              <SaveExample>Save as example</SaveExample>
              <MetaIcon $w={21}><Icon n="dots" /></MetaIcon>
            </ResponseBar>
            <Preview>
              <PieChart />
              <ScrollTrack>
                <Arrow $up />
                <ScrollThumb />
                <Arrow />
              </ScrollTrack>
            </Preview>
          </Main>
          <ToolRail>
            <Icon n="doc" />
            <Icon n="comment" />
            <Icon n="code" />
            <Icon n="swap" />
            <Icon n="info" />
          </ToolRail>
        </Body>

        <StatusBar>
          <StatusItem $w={32}><Icon n="panel" s={16} /></StatusItem>
          <StatusItem $w={76}><Icon n="check" s={16} />Online</StatusItem>
          <StatusItem $w={143}><Icon n="search" s={16} />Find and replace</StatusItem>
          <StatusItem $w={90}><Icon n="console" s={16} />Console</StatusItem>
          <Spring />
          <StatusItem $w={91} $c="#6b3aa0"><Icon n="postbot" s={16} c="#6b3aa0" />Postbot</StatusItem>
          <StatusItem $w={86}><Icon n="runner" s={16} />Runner</StatusItem>
          <StatusItem $w={112}><Icon n="proxy" s={16} />Start Proxy</StatusItem>
          <StatusItem $w={92}><Icon n="cookie" s={16} />Cookies</StatusItem>
          <StatusItem $w={73}><Icon n="vault" s={16} />Vault</StatusItem>
          <StatusItem $w={76}><Icon n="trash" s={16} />Trash</StatusItem>
          <StatusItem $w={35}><Icon n="panes" s={16} /></StatusItem>
          <StatusItem $w={16}><Icon n="help" s={16} /></StatusItem>
        </StatusBar>
      </AppWindow>

      <Taskbar>
        <Weather>
          <Art $w={44} $h={36} viewBox="0 0 44 36">
            <path d="M4 22c5 2 10-1 12-5l12 2c1 12-20 18-24 3z" fill="#f08a24" />
            <path d="M2 15c-1-5 4-6 5-5 2-5 9-5 10 1l3 4z" fill="#b9cdf3" />
            <path d="M16 30c-3-4 2-7 4-6 2-5 9-4 9 0 4 0 4 6 1 6z" fill="#c3d6fa" />
            <rect x="13" y="0" width="29" height="20" rx="10" fill="#2d2f30" />
            <text x="17.500" y="15" fontSize="14" fill="#fff" textLength="18">31°</text>
          </Art>
        </Weather>
        <Art viewBox="0 0 29 29" $w={29} $h={31}>
          <defs><linearGradient id="win" x2="1" y2="1"><stop stopColor="#8be0ff" /><stop offset=".5" stopColor="#3fc3ff" /><stop offset="1" stopColor="#0a93f8" /></linearGradient></defs>
          <path d="M0 0h14v14H0zM15 0h14v14H15zM0 15h14v14H0zM15 15h14v14H15z" fill="url(#win)" />
        </Art>
        <TaskSearch>
          <Icon n="search" s={20} c="#222" sw={1.7} />
          Search
          <Spring />
          <Art $w={54} $h={30} viewBox="0 0 54 30">
            <path d="M2 11h15v8c0 5-3 7-7 7s-8-2-8-7zM17 13h3c2 0 2 7-1 7h-2" fill="#d6cdf0" />
            <path d="M4 13h6v8H4z" fill="#b5704e" />
            <path d="M0 26h23v2H0z" fill="#6e4a4a" />
            <path d="M6 8c-1-2 1-3 0-5M11 8c-1-2 1-3 0-5M16 8c-1-2 1-3 0-5" stroke="#8a8a8a" fill="none" />
            <path d="M28 29C33 20 40 11 51 4" stroke="#5f8f1a" fill="none" strokeWidth="1.500" />
            <path d="M52 3c-7-1-12 3-11 8 6 1 8-4 11-8zM36 1c-4 5-3 10 0 13 4-4 3-9 0-13zM25 13c0 6 3 9 7 9 0-5-3-8-7-9zM35 20c4-4 9-4 12-3-3 4-8 5-12 3z" fill="#86b92c" />
          </Art>
        </TaskSearch>
        {apps.map((a, i) => (
          <TaskButton key={i} $open={a.open} $active={a.active}>{a.art}</TaskButton>
        ))}
        <Spring />
        <Cell $w={30}><Art $w={12} $h={8} viewBox="0 0 12 8"><path d="M1 7l5-5 5 5" fill="none" stroke="#fff" strokeWidth="2" /></Art></Cell>
        <Cell $w={50}>
          <Art $w={21} $h={20} viewBox="0 0 21 20">
            <path d="M3 14c-4-2-3-7 1-7C6 0 15 0 15 7c2 1 2 4 0 7z" fill="#a9a9a9" />
            <path d="M3 14c-4-2-3-7 1-7l9 7z" fill="#dcdcdc" />
            <circle cx="15" cy="14" r="5.800" fill="#e9f4ff" />
            <path d="M12 14a3 3 0 0 1 5-2M18 14a3 3 0 0 1-5 2" stroke="#1272cc" strokeWidth="1.600" fill="none" />
          </Art>
        </Cell>
        <TrayText $w={46} $ls={-0.4}>{"ENG\nIN"}</TrayText>
        <Cell $w={48}>
          <Art $w={20} $h={18} viewBox="0 0 20 18"><path d="M1 7c5-6 13-6 18 0M4 10c4-4 8-4 12 0M7 13c2-2 4-2 6 0" fill="none" stroke="#fff" strokeWidth="1.600" /><circle cx="10" cy="15.500" r="1.500" fill="#fff" /></Art>
        </Cell>
        <Cell $w={12}>
          <Art $w={20} $h={18} viewBox="0 0 20 18"><path d="M1 6.500h3L9 2v14l-5-4.500H1zM12 6c1.500 2 1.500 4 0 6M14.500 4c3 3 3 7 0 10M17 2c4 4 4 10 0 14" fill="none" stroke="#fff" strokeWidth="1.400" /></Art>
        </Cell>
        <Cell $w={48}>
          <Art $w={20} $h={18} viewBox="0 0 20 18"><path d="M6 5h9c1.500 0 2.500 1 2.500 2.500v6c0 1-1 2-2 2H4c-1.500 0-2.500-1-2.500-2V10" fill="none" stroke="#fff" strokeWidth="1.500" /><path d="M8 7h7.500v6.500H4V11zM18 8.500h2v4h-2zM3 0L0 7h3l-1 5 6-7H5l1-5z" fill="#fff" /></Art>
        </Cell>
        <TrayText $w={83} $align="right" $ls={-0.05}>{"22:28\n21-05-2024"}</TrayText>
        <Cell $w={40}>
          <Art $w={18} $h={22} viewBox="0 0 18 22"><path d="M3 15V9c0-7 11-7 11 0v6l2 3H1z" fill="#fff" /><path d="M6 19h5c0 3-5 3-5 0z" fill="#fff" /><text x="4.500" y="15" fontSize="10" fontWeight="700" fill="#222">z</text><text x="12" y="7" fontSize="9" fontWeight="700" fill="#fff">z</text></Art>
        </Cell>
        <Cell $w={50}>
          <Art $w={30} $h={34} viewBox="0 0 30 34">
            <defs><linearGradient id="cp1" x1="0" x2=".3" y2="1"><stop stopColor="#1d6fe8" /><stop offset=".5" stopColor="#2fc0a0" /><stop offset="1" stopColor="#f5d33b" /></linearGradient><linearGradient id="cp2" x2="0" y2="1"><stop stopColor="#2b7df0" /><stop offset=".5" stopColor="#b568e8" /><stop offset="1" stopColor="#f2578a" /></linearGradient></defs>
            <path d="M9 2h9c3 0 3 2 4 4l-5 2-5 14H4c-4 0-4-3-3-6L5 5c1-2 2-3 4-3z" fill="url(#cp1)" />
            <path d="M20 8h5c4 0 4 3 3 6l-3 9H13z" fill="url(#cp2)" />
            <rect x="7" y="22" width="23" height="11" rx="2.500" fill="#ffc61a" />
            <text x="10" y="31" fontSize="9" fontWeight="700" fill="#222" textLength="17">PRE</text>
          </Art>
        </Cell>
        <Cell $w={15} />
      </Taskbar>
    </Desktop>
  );
}
